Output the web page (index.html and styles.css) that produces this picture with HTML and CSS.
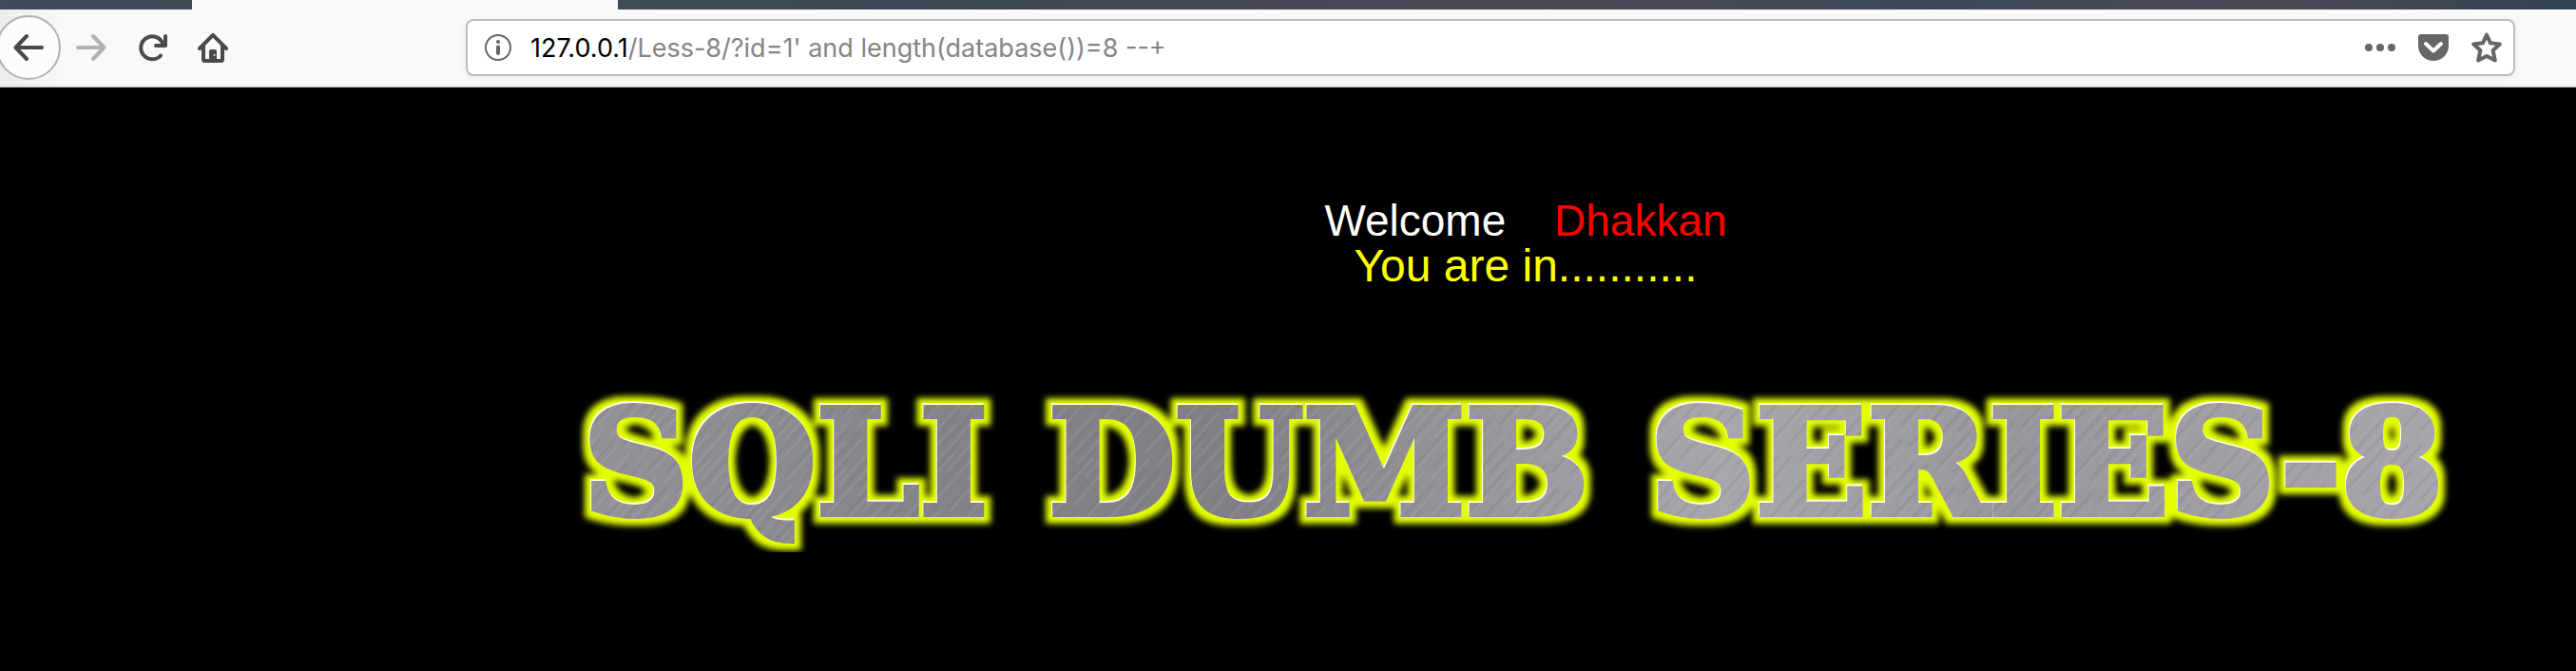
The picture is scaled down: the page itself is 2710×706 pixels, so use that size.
FILE: index.html
```html
<!DOCTYPE html>
<html lang="en">
<head>
<meta charset="utf-8">
<title>Less-8 Blind- Boolian- Single Quotes- String</title>
<link rel="stylesheet" href="styles.css">
</head>
<body>
<header class="browser">
  <div class="tabs"><div class="tab-active"></div></div>
  <nav class="toolbar" aria-label="Navigation">
    <button class="tool tool-back" aria-label="Back">
      <svg class="icon" viewBox="0 0 32 32"><path d="M30 16H3M14 4L2.500 16L14 28"/></svg>
    </button>
    <button class="tool tool-off" aria-label="Forward" disabled>
      <svg class="icon" viewBox="0 0 32 32"><path d="M2 16h27M18 4L29.500 16L18 28"/></svg>
    </button>
    <button class="tool" aria-label="Reload">
      <svg class="icon" viewBox="0 0 32 32"><path d="M25 24.500A12 12 0 1 1 27 11M30 4v10H20"/><path class="fill" d="M30 7v8h-8z"/></svg>
    </button>
    <button class="tool" aria-label="Home">
      <svg class="icon" viewBox="0 0 32 32"><path d="M2 17L16 2.800L30 17M6 15v13.500q0 1.500 1.500 1.500h17q1.500 0 1.500-1.500V15"/><path class="fill" d="M12 30V20q0-2 2-2h4q2 0 2 2v10z"/><circle class="hole" cx="17.500" cy="24" r="1"/></svg>
    </button>
    <form class="address">
      <button class="address-tool" type="button" aria-label="Site information">
        <svg class="icon icon-thin" viewBox="0 0 32 32"><circle cx="16" cy="16" r="13"/><path class="bar" d="M16 15.500v6.500"/><circle class="fill" cx="16" cy="10" r="2"/></svg>
      </button>
      <label class="host" for="url">127.0.0.1</label>
      <input class="url" id="url" type="text" value="/Less-8/?id=1' and length(database())=8 --+" spellcheck="false">
      <button class="address-tool" type="button" aria-label="Page actions">
        <svg class="icon" viewBox="0 0 32 32"><circle class="fill" cx="4" cy="16" r="4"/><circle class="fill" cx="16" cy="16" r="4"/><circle class="fill" cx="28" cy="16" r="4"/></svg>
      </button>
      <button class="address-tool" type="button" aria-label="Save to Pocket">
        <svg class="icon" viewBox="0 0 32 32"><path class="fill" d="M3 2h26q3 0 3 3v9c0 9-7 16-16 16S0 23 0 14V5q0-3 3-3z"/><path class="check" d="M8 12l8 7.500L24 12"/></svg>
      </button>
      <button class="address-tool" type="button" aria-label="Bookmark this page">
        <svg class="icon" viewBox="0 0 32 32"><path d="M16 2.500l4 8.800 9.800 1.200-7.200 6.500 2.200 10.500L16 25l-8.800 4.500L9.400 19 2.200 12.500 12 11.300z"/></svg>
      </button>
    </form>
  </nav>
</header>
<main class="page">
  <p class="welcome">Welcome <span class="name">Dhakkan</span></p>
  <p class="status">You are in...........</p>
  <svg class="logo" viewBox="0 0 2040 180" role="img" aria-label="SQLI DUMB SERIES-8">
    <defs>
      <linearGradient id="sheen" x1="0" x2="1" y1="0" y2="0">
        <stop offset="0" stop-color="#96949a"/><stop offset=".2" stop-color="#85838a"/><stop offset=".35" stop-color="#828086"/><stop offset=".45" stop-color="#949298"/><stop offset=".6" stop-color="#a8a6ac"/><stop offset=".75" stop-color="#98969c"/><stop offset="1" stop-color="#aaa8ae"/>
      </linearGradient>
      <pattern id="metal" width="2040" height="200" patternUnits="userSpaceOnUse">
        <rect width="2040" height="200" fill="url(#sheen)"/>
        <rect width="2040" height="200" fill="url(#brush)"/>
      </pattern>
      <pattern id="brush" width="37" height="90" patternUnits="userSpaceOnUse" patternTransform="rotate(42)">
        <path d="M3 0v60M14 20v70M25 5v50M33 40v50" stroke="#c4c2c8" stroke-opacity=".3"/>
        <path d="M8 10v70M19 0v45M29 30v60" stroke="#5c5a62" stroke-opacity=".3"/>
      </pattern>
      <filter id="glow" x="-5%" y="-30%" width="110%" height="160%" color-interpolation-filters="sRGB">
        <feMorphology in="SourceAlpha" operator="dilate" radius="7" result="wide"/>
        <feGaussianBlur in="wide" stdDeviation="3" result="soft"/>
        <feFlood flood-color="#e4ff00"/>
        <feComposite in2="soft" operator="in" result="halo"/>
        <feOffset in="SourceAlpha" dx="-1" dy="-2" result="edge"/>
        <feFlood flood-color="#ffffe0"/>
        <feComposite in2="edge" operator="in" result="light"/>
        <feMerge><feMergeNode in="halo"/><feMergeNode in="light"/><feMergeNode in="SourceGraphic"/></feMerge>
      </filter>
    </defs>
    <g class="logo-text" filter="url(#glow)" fill="url(#metal)" stroke="url(#metal)">
      <text x="36" y="140">SQLI</text>
      <text x="522" y="140">DUMB</text>
      <text x="1150" y="140">SERIES-8</text>
    </g>
  </svg>
</main>
</body>
</html>
```
FILE: styles.css
```css
* { box-sizing: border-box; }
body {
  margin: 0;
  background: #000;
  font-family: "Liberation Sans", Arial, sans-serif;
}
.tabs {
  height: 10px;
  padding-left: 202px;
  background: linear-gradient(90deg, #3e4b58, #414b55 25%, #3b4754 35%, #4a4a54 60%, #3c4857 75%, #494a54 88%, #344453);
}
.tab-active {
  width: 448px;
  height: 100%;
  background: #f9f9fa;
}
.toolbar {
  display: flex;
  align-items: center;
  height: 82px;
  padding-right: 64px;
  border-bottom: 2px solid #dcdcdc;
  background: linear-gradient(90deg, #ededed, #f9f9fa 70px);
}
button {
  padding: 0;
  border: 0;
  background: none;
}
.tool {
  display: flex;
  justify-content: center;
  flex: none;
  width: 64px;
  color: #4a4a4a;
}
.tool-back {
  align-items: center;
  width: 68px;
  height: 68px;
  margin-left: -4px;
  border: 2px solid #b1b1b1;
  border-radius: 50%;
  background: #fcfcfc;
}
.tool-off { color: #b1b1b1; }
.icon {
  display: block;
  width: 32px;
  height: 32px;
  fill: none;
  stroke: currentColor;
  stroke-width: 4;
  stroke-linecap: round;
  stroke-linejoin: round;
}
.icon-thin { stroke-width: 2; }
.icon .fill { fill: currentColor; stroke: none; }
.icon .hole { fill: #f9f9fa; stroke: none; }
.icon .bar { stroke-width: 4; }
.icon .check { stroke: #fff; }
.address {
  display: flex;
  align-items: center;
  flex: 1;
  min-width: 0;
  height: 60px;
  margin-left: 234px;
  padding: 0 12px 0 16px;
  border: 2px solid #bdbdbd;
  border-radius: 8px;
  background: #fff;
  box-shadow: 0 2px 8px rgba(0, 0, 0, .06);
}
.address-tool {
  flex: none;
  margin-left: 24px;
  color: #666;
}
.address-tool:first-child { margin-left: 0; }
.host, .url {
  padding: 2px 0 0;
  font-family: Inter, sans-serif;
  font-size: 27px;
  line-height: 40px;
}
.host {
  margin-left: 18px;
  color: #000;
}
.url {
  flex: 1;
  min-width: 0;
  border: 0;
  outline: 0;
  background: none;
  color: #858585;
}
.page {
  padding: 114px 0 0 500px;
  text-align: center;
}
.welcome, .status { margin: 0; }
.welcome {
  color: #fff;
  font-size: 46px;
  line-height: 52px;
}
.name {
  margin-left: 38px;
  color: #f00;
}
.status {
  color: #ff0;
  font-size: 48px;
  line-height: 44px;
}
.logo {
  display: block;
  width: 93%;
  margin: 98px auto 0;
  overflow: visible;
}
.logo-text {
  font-family: "DejaVu Serif", serif;
  font-size: 153px;
  font-weight: 700;
  stroke-width: 6px;
}
```
